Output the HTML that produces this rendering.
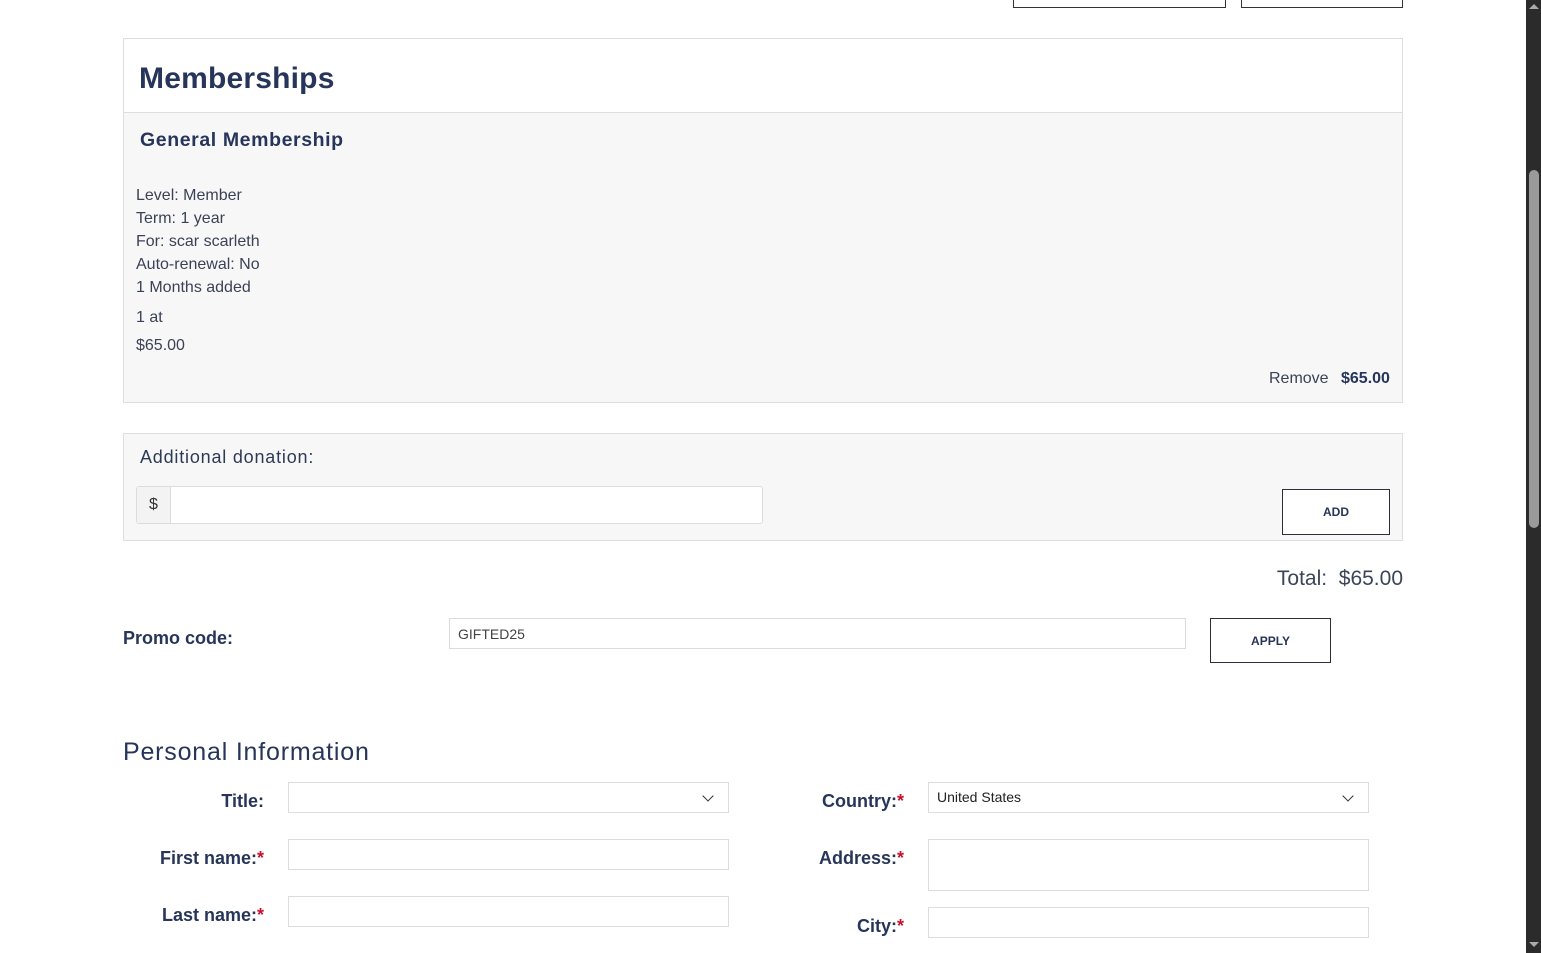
<!DOCTYPE html>
<html><head><meta charset="utf-8"><style>
*{box-sizing:border-box;margin:0;padding:0}
body{width:1541px;height:953px;overflow:hidden;background:#fff;font-family:"Liberation Sans",Arial,sans-serif;position:relative;color:#3b4255}
.a{position:absolute}
.navy{color:#263559}
.box{position:absolute;border:1px solid #dedede}
.inp{position:absolute;border:1px solid #dcdcdc;background:#fff}
.btn{position:absolute;border:1px solid #2b2f3a;background:#fff;color:#263559;font-weight:bold;font-size:12px;display:flex;align-items:center;justify-content:center}
.lbl{position:absolute;font-weight:bold;font-size:18px;color:#263559;text-align:right}
.req{color:#c8102e}
.chev{position:absolute;width:8px;height:8px;border-right:1.5px solid #333;border-bottom:1.5px solid #333;transform:rotate(45deg)}
</style></head><body>
<div class="a" style="left:1013px;top:-2px;width:213px;height:10px;border:1px solid #333;border-top:none"></div>
<div class="a" style="left:1241px;top:-2px;width:162px;height:10px;border:1px solid #333;border-top:none"></div>

<div class="box" style="left:123px;top:38px;width:1280px;height:365px;background:#f7f7f7"></div>
<div class="a" style="left:124px;top:39px;width:1278px;height:74px;background:#fff;border-bottom:1px solid #dedede"></div>
<div class="a navy" style="left:139px;top:62px;font-size:30px;font-weight:bold;letter-spacing:0.2px">Memberships</div>
<div class="a navy" style="left:140px;top:129px;font-size:19.5px;font-weight:bold;letter-spacing:0.6px">General Membership</div>
<div class="a" style="left:136px;top:184px;font-size:16px;line-height:23px">Level: Member<br>Term: 1 year<br>For: scar scarleth<br>Auto-renewal: No<br>1 Months added</div>
<div class="a" style="left:136px;top:309px;font-size:16px">1 at</div>
<div class="a" style="left:136px;top:337px;font-size:16px">$65.00</div>
<div class="a" style="left:1269px;top:370px;font-size:16px">Remove</div>
<div class="a navy" style="left:1341px;top:370px;font-size:16px;font-weight:bold">$65.00</div>

<div class="box" style="left:123px;top:433px;width:1280px;height:108px;background:#f7f7f7"></div>
<div class="a" style="left:140px;top:447px;font-size:18px;letter-spacing:0.8px;color:#2e3a55">Additional donation:</div>
<div class="inp" style="left:136px;top:486px;width:627px;height:38px;border-radius:3px"></div>
<div class="a" style="left:137px;top:487px;width:34px;height:36px;background:#f3f3f3;border-right:1px solid #dcdcdc;font-size:16px;display:flex;align-items:center;justify-content:center;color:#333">$</div>
<div class="btn" style="left:1282px;top:489px;width:108px;height:46px">ADD</div>

<div class="a" style="left:1100px;width:303px;text-align:right;top:567px;font-size:21px;color:#3b4559">Total:&nbsp;&nbsp;$65.00</div>

<div class="a navy" style="left:123px;top:628px;font-size:18px;font-weight:bold">Promo code:</div>
<div class="inp" style="left:449px;top:618px;width:737px;height:31px;font-size:14px;padding:7px 8px;color:#444">GIFTED25</div>
<div class="btn" style="left:1210px;top:618px;width:121px;height:45px">APPLY</div>

<div class="a navy" style="left:123px;top:738px;font-size:25px;letter-spacing:0.8px">Personal Information</div>

<div class="lbl" style="left:123px;top:791px;width:141px">Title:</div>
<div class="inp" style="left:288px;top:782px;width:441px;height:31px"></div><div class="chev" style="left:704px;top:792px"></div>
<div class="lbl" style="left:123px;top:848px;width:141px">First name:<span class="req">*</span></div>
<div class="inp" style="left:288px;top:839px;width:441px;height:31px"></div>
<div class="lbl" style="left:123px;top:905px;width:141px">Last name:<span class="req">*</span></div>
<div class="inp" style="left:288px;top:896px;width:441px;height:31px"></div>

<div class="lbl" style="left:760px;top:791px;width:144px">Country:<span class="req">*</span></div>
<div class="inp" style="left:928px;top:782px;width:441px;height:31px;font-size:14px;padding:6px 8px;color:#222">United States</div><div class="chev" style="left:1344px;top:792px"></div>
<div class="lbl" style="left:760px;top:848px;width:144px">Address:<span class="req">*</span></div>
<div class="inp" style="left:928px;top:839px;width:441px;height:52px"></div>
<div class="lbl" style="left:760px;top:916px;width:144px">City:<span class="req">*</span></div>
<div class="inp" style="left:928px;top:907px;width:441px;height:31px"></div>

<div class="a" style="left:1526px;top:0;width:15px;height:953px;background:#2b2b2b"></div>
<div class="a" style="left:1529px;top:170px;width:10px;height:358px;background:#9a9a9a;border-radius:5px"></div>
<div class="a" style="left:1529px;top:4px;width:0;height:0;border-left:5px solid transparent;border-right:5px solid transparent;border-bottom:5px solid #aaa"></div>
<div class="a" style="left:1529px;top:942px;width:0;height:0;border-left:5px solid transparent;border-right:5px solid transparent;border-top:5px solid #aaa"></div>
</body></html>
